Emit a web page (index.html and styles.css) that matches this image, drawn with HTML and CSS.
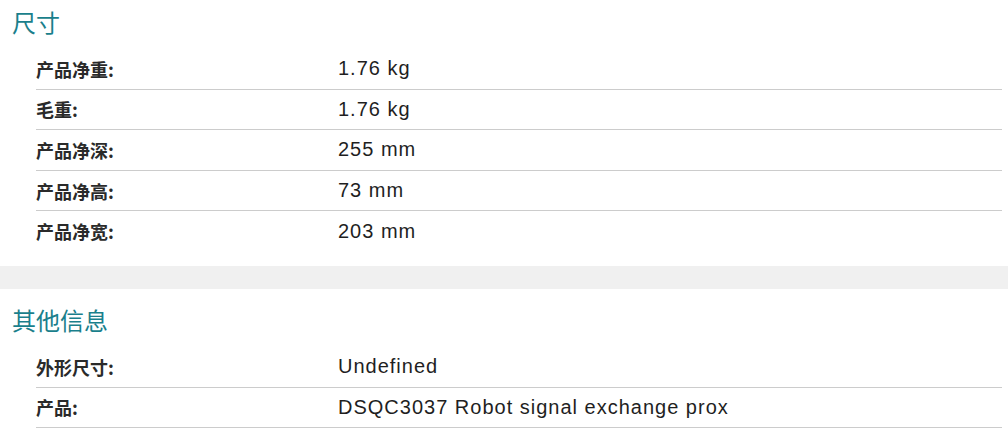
FILE: index.html
```html
<!DOCTYPE html>
<html lang="zh">
<head>
<meta charset="utf-8">
<link rel="stylesheet" href="styles.css">
</head>
<body>
<section class="section">
  <h2 class="section-title">尺寸</h2>
  <div class="specs">
    <div class="row"><div class="label">产品净重:</div><div class="value">1.76 kg</div></div>
    <div class="row"><div class="label">毛重:</div><div class="value">1.76 kg</div></div>
    <div class="row"><div class="label">产品净深:</div><div class="value">255 mm</div></div>
    <div class="row"><div class="label">产品净高:</div><div class="value">73 mm</div></div>
    <div class="row"><div class="label">产品净宽:</div><div class="value">203 mm</div></div>
  </div>
</section>
<div class="band"></div>
<section class="section section-next">
  <h2 class="section-title">其他信息</h2>
  <div class="specs">
    <div class="row"><div class="label">外形尺寸:</div><div class="value">Undefined</div></div>
    <div class="row"><div class="label">产品:</div><div class="value">DSQC3037 Robot signal exchange prox</div></div>
  </div>
</section>
</body>
</html>
```
FILE: styles.css
```css
html, body {
  margin: 0;
  padding: 0;
  background: #fff;
}
body {
  font-family: "Liberation Sans", Arial, "Noto Sans CJK SC", sans-serif;
  color: #222;
}
.section {
  padding: 0 6px 0 12px;
}
.section-title {
  margin: 0;
  padding-top: 8px;
  height: 41px;
  font-size: 24px;
  font-weight: normal;
  color: #1a7f8c;
  line-height: 28px;
  font-family: "Noto Sans CJK SC", sans-serif;
}
.section-next .section-title {
  padding-top: 17px;
}
.specs {
  padding-left: 24px;
}
.row {
  display: grid;
  grid-template-columns: 302px 1fr;
  align-items: center;
  height: 39.6px;
  border-bottom: 1px solid #cccccc;
}
.section:first-child .row:last-child {
  border-bottom: none;
}
.label {
  font-weight: bold;
  font-size: 18px;
  font-family: "Noto Sans CJK SC", sans-serif;
  color: #2a2a2a;
}
.value {
  font-size: 20px;
  color: #1f1f1f;
  letter-spacing: 1px;
}
.band {
  margin-top: 15px;
  height: 23px;
  background: #f0f0f0;
}
```
